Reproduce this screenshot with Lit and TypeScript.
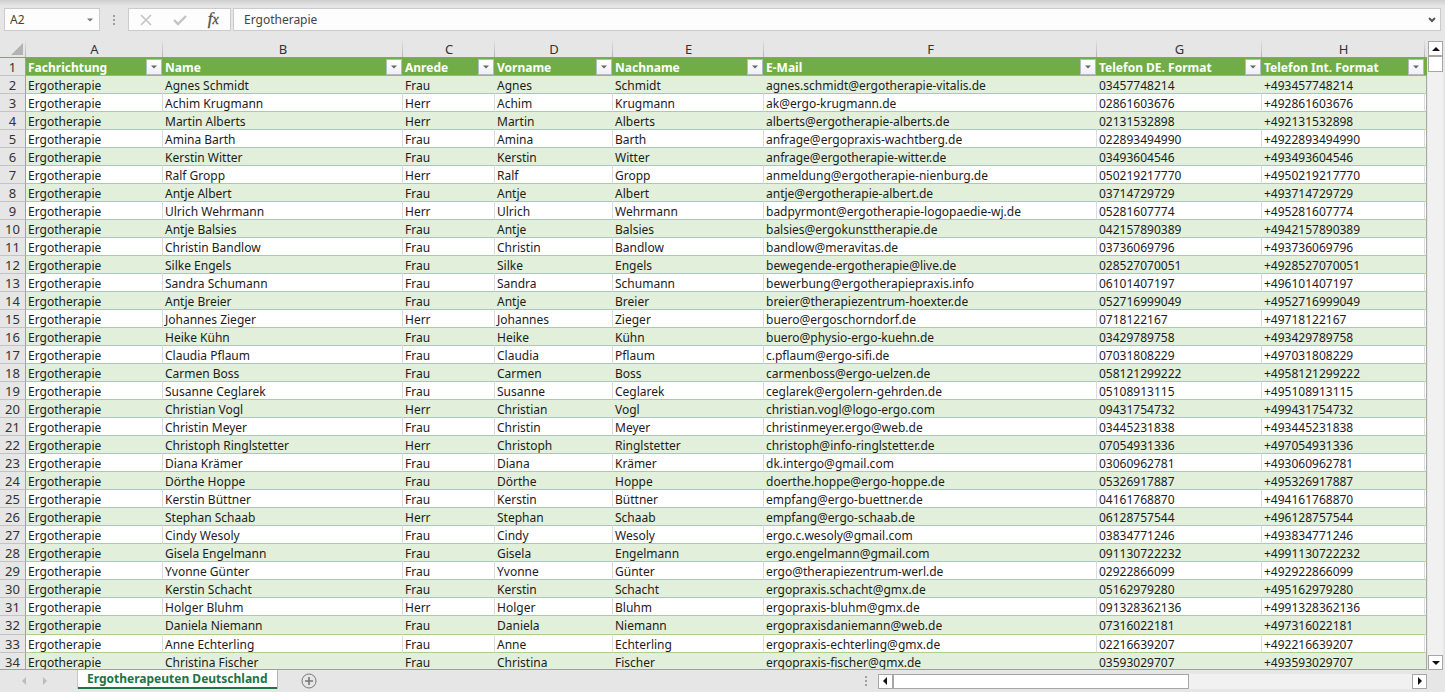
import { LitElement, html, css, svg } from "lit";
import { customElement, state } from "lit/decorators.js";

const COLUMNS = [
  { letter: "A", title: "Fachrichtung", cls: "w-a" },
  { letter: "B", title: "Name", cls: "w-b" },
  { letter: "C", title: "Anrede", cls: "w-c" },
  { letter: "D", title: "Vorname", cls: "w-d" },
  { letter: "E", title: "Nachname", cls: "w-e" },
  { letter: "F", title: "E-Mail", cls: "w-f" },
  { letter: "G", title: "Telefon DE. Format", cls: "w-g" },
  { letter: "H", title: "Telefon Int. Format", cls: "w-h" },
];

// Salutation, first name, last name, e-mail, national number
const CONTACTS: string[][] = [
  ["Frau", "Agnes", "Schmidt", "agnes.schmidt@ergotherapie-vitalis.de", "03457748214"],
  ["Herr", "Achim", "Krugmann", "ak@ergo-krugmann.de", "02861603676"],
  ["Herr", "Martin", "Alberts", "alberts@ergotherapie-alberts.de", "02131532898"],
  ["Frau", "Amina", "Barth", "anfrage@ergopraxis-wachtberg.de", "022893494990"],
  ["Frau", "Kerstin", "Witter", "anfrage@ergotherapie-witter.de", "03493604546"],
  ["Herr", "Ralf", "Gropp", "anmeldung@ergotherapie-nienburg.de", "050219217770"],
  ["Frau", "Antje", "Albert", "antje@ergotherapie-albert.de", "03714729729"],
  ["Herr", "Ulrich", "Wehrmann", "badpyrmont@ergotherapie-logopaedie-wj.de", "05281607774"],
  ["Frau", "Antje", "Balsies", "balsies@ergokunsttherapie.de", "042157890389"],
  ["Frau", "Christin", "Bandlow", "bandlow@meravitas.de", "03736069796"],
  ["Frau", "Silke", "Engels", "bewegende-ergotherapie@live.de", "028527070051"],
  ["Frau", "Sandra", "Schumann", "bewerbung@ergotherapiepraxis.info", "06101407197"],
  ["Frau", "Antje", "Breier", "breier@therapiezentrum-hoexter.de", "052716999049"],
  ["Herr", "Johannes", "Zieger", "buero@ergoschorndorf.de", "0718122167"],
  ["Frau", "Heike", "Kühn", "buero@physio-ergo-kuehn.de", "03429789758"],
  ["Frau", "Claudia", "Pflaum", "c.pflaum@ergo-sifi.de", "07031808229"],
  ["Frau", "Carmen", "Boss", "carmenboss@ergo-uelzen.de", "058121299222"],
  ["Frau", "Susanne", "Ceglarek", "ceglarek@ergolern-gehrden.de", "05108913115"],
  ["Herr", "Christian", "Vogl", "christian.vogl@logo-ergo.com", "09431754732"],
  ["Frau", "Christin", "Meyer", "christinmeyer.ergo@web.de", "03445231838"],
  ["Herr", "Christoph", "Ringlstetter", "christoph@info-ringlstetter.de", "07054931336"],
  ["Frau", "Diana", "Krämer", "dk.intergo@gmail.com", "03060962781"],
  ["Frau", "Dörthe", "Hoppe", "doerthe.hoppe@ergo-hoppe.de", "05326917887"],
  ["Frau", "Kerstin", "Büttner", "empfang@ergo-buettner.de", "04161768870"],
  ["Herr", "Stephan", "Schaab", "empfang@ergo-schaab.de", "06128757544"],
  ["Frau", "Cindy", "Wesoly", "ergo.c.wesoly@gmail.com", "03834771246"],
  ["Frau", "Gisela", "Engelmann", "ergo.engelmann@gmail.com", "091130722232"],
  ["Frau", "Yvonne", "Günter", "ergo@therapiezentrum-werl.de", "02922866099"],
  ["Frau", "Kerstin", "Schacht", "ergopraxis.schacht@gmx.de", "05162979280"],
  ["Herr", "Holger", "Bluhm", "ergopraxis-bluhm@gmx.de", "091328362136"],
  ["Frau", "Daniela", "Niemann", "ergopraxisdaniemann@web.de", "07316022181"],
  ["Frau", "Anne", "Echterling", "ergopraxis-echterling@gmx.de", "02216639207"],
  ["Frau", "Christina", "Fischer", "ergopraxis-fischer@gmx.de", "03593029707"],
];

const toRow = ([salutation, first, last, mail, phone]: string[]) => [
  "Ergotherapie",
  `${first} ${last}`,
  salutation,
  first,
  last,
  mail,
  phone,
  `+49${phone.slice(1)}`,
];

const arrow = (points: string, size = 8) => html`
  <svg width=${size} height=${size} viewBox="0 0 8 8" aria-hidden="true">
    ${svg`<polygon points=${points} fill="currentColor"></polygon>`}
  </svg>
`;
const DOWN = "0,2 8,2 4,6";
const UP = "0,6 8,6 4,2";
const LEFT = "6,0 6,8 2,4";
const RIGHT = "2,0 2,8 6,4";

@customElement("formula-bar")
export class FormulaBar extends LitElement {
  static styles = css`
    :host {
      display: block;
      background: linear-gradient(#cfcfcf, #e6e6e6 6px);
    }
    .bar {
      display: flex;
      align-items: stretch;
      height: 23px;
      padding: 8px 4px 8px 4px;
    }
    .box {
      display: flex;
      align-items: center;
      box-sizing: border-box;
      border: 1px solid #cbcbcb;
      background: #fdfdfd;
    }
    .name {
      width: 96px;
    }
    .formula {
      flex: 1;
      min-width: 0;
      margin-left: 2px;
    }
    input {
      flex: 1;
      min-width: 0;
      border: 0;
      outline: 0;
      background: none;
      font: 12px/18px "Noto Sans", sans-serif;
      color: #444;
      padding: 0 0 0 5px;
    }
    .formula input {
      padding-left: 10px;
    }
    button {
      display: flex;
      align-items: center;
      justify-content: center;
      border: 0;
      background: none;
      padding: 0;
      width: 18px;
      height: 20px;
      color: #777;
    }
    .formula button {
      width: 16px;
      color: #555;
    }
    .grip {
      width: 28px;
      display: flex;
      align-items: center;
      justify-content: center;
      color: #a0a0a0;
    }
    .tools {
      width: 103px;
    }
    .tools button {
      flex: 1;
      color: #c4c4c4;
    }
    .tools .fx {
      font: italic 17px/20px "Liberation Serif", serif;
      color: #4f4f4f;
      -webkit-text-stroke: 0.3px #4f4f4f;
    }
    .fx small {
      font-size: 14px;
    }
  `;

  render() {
    return html`
      <div class="bar">
        <div class="box name">
          <input aria-label="Namenfeld" value="A2" />
          <button aria-label="Namen anzeigen">${arrow(DOWN, 6)}</button>
        </div>
        <div class="grip">
          <svg width="2" height="10" viewBox="0 0 2 10" fill="currentColor" aria-hidden="true">
            <rect width="2" height="2" /><rect y="4" width="2" height="2" /><rect y="8" width="2" height="2" />
          </svg>
        </div>
        <div class="box tools">
          <button aria-label="Abbrechen">
            <svg width="12" height="12" viewBox="0 0 12 12" fill="none" stroke="currentColor" stroke-width="1.6">
              <path d="M1 1L11 11M11 1L1 11" />
            </svg>
          </button>
          <button aria-label="Eingeben">
            <svg width="14" height="12" viewBox="0 0 14 12" fill="none" stroke="currentColor" stroke-width="2.4">
              <path d="M1 6L5 10L13 2" />
            </svg>
          </button>
          <button class="fx" aria-label="Funktion einfügen"><span>f<small>x</small></span></button>
        </div>
        <div class="box formula">
          <input aria-label="Bearbeitungsleiste" value="Ergotherapie" />
          <button aria-label="Bearbeitungsleiste erweitern">
            <svg width="8" height="6" viewBox="0 0 8 6" fill="none" stroke="currentColor" stroke-width="2">
              <path d="M1 1L4 4L7 1" />
            </svg>
          </button>
        </div>
      </div>
    `;
  }
}

@customElement("sheet-grid")
export class SheetGrid extends LitElement {
  static styles = css`
    :host {
      display: block;
      overflow: hidden;
      box-sizing: border-box;
      border-bottom: 1px solid #9f9f9f;
    }
    table {
      table-layout: fixed;
      border-collapse: separate;
      border-spacing: 0;
      width: 100%;
      height: calc(100% + 2px);
      font: 12px/15px "Noto Sans", sans-serif;
      color: #1c1c1c;
    }
    th,
    td {
      box-sizing: border-box;
      padding: 2px 0 0 2px;
      white-space: nowrap;
      overflow: hidden;
      text-align: left;
      height: 18px;
    }
    .w-num { width: 26px; }
    .w-a { width: 137px; }
    .w-b { width: 240px; }
    .w-c { width: 92px; }
    .w-d { width: 118px; }
    .w-e { width: 151px; }
    .w-g { width: 165px; }
    .w-h { width: 163px; }
    .w-edge { width: 2px; }
    .letters th {
      height: 19px;
      padding: 2px 0 0;
      font-size: 13px;
      line-height: 16px;
      font-weight: 400;
      text-align: center;
      color: #333;
      background: linear-gradient(#e6e6e6, #b4b4b4) right / 1px 100% no-repeat #e6e6e6;
      border-bottom: 1px solid #8d9c83;
    }
    .letters .edge {
      background: #e6e6e6;
    }
    .letters .corner {
      text-align: right;
      padding: 2px 3px 0 0;
      line-height: 0;
    }
    .num {
      padding: 2px 0 0;
      text-align: center;
      font-size: 13px;
      font-weight: 400;
      color: #333;
      background: #e6e6e6;
      border-right: 1px solid #a0a0a0;
      border-bottom: 1px solid #c3c3c3;
    }
    .titles .title {
      padding-top: 0;
      background: #70ad47;
      color: #fff;
      font-weight: 700;
      border-bottom: 1px solid #8fc06d;
    }
    .title div {
      display: flex;
      align-items: center;
      justify-content: space-between;
    }
    .title span {
      padding-top: 2px;
    }
    .filter {
      display: flex;
      align-items: center;
      justify-content: center;
      box-sizing: border-box;
      width: 16px;
      height: 16px;
      padding: 0;
      margin-right: 1px;
      border: 1px solid #b5b9c4;
      background: linear-gradient(#fff, #eef0f5);
      color: #666;
    }
    .cell {
      background: #fff;
      border-bottom: 1px solid #a9d08e;
      border-right: 1px solid #dcdcdc;
    }
    .band .cell {
      background: #e2efda;
      border-right-color: #e2efda;
    }
    .cell.edge,
    .band .cell.edge {
      border-right: 1px solid #a9a9a9;
      padding: 0;
    }
  `;

  render() {
    return html`
      <table>
        <colgroup>
          <col class="w-num" />
          ${COLUMNS.map((c) => html`<col class=${c.cls} />`)}
          <col class="w-edge" />
        </colgroup>
        <thead>
          <tr class="letters">
            <th class="corner" aria-label="Alles auswählen">
              <svg width="12" height="12" viewBox="0 0 12 12"><polygon points="12,0 12,12 0,12" fill="#b3b3b3" /></svg>
            </th>
            ${COLUMNS.map((c) => html`<th scope="col">${c.letter}</th>`)}
            <th class="edge"></th>
          </tr>
        </thead>
        <tbody>
          <tr class="titles">
            <th class="num" scope="row">1</th>
            ${COLUMNS.map(
              (c) => html`
                <th class="title">
                  <div>
                    <span>${c.title}</span>
                    <button class="filter" aria-label="${c.title} filtern">${arrow(DOWN, 6)}</button>
                  </div>
                </th>
              `,
            )}
            <th class="title"></th>
          </tr>
          ${CONTACTS.map(
            (contact, i) => html`
              <tr class=${i % 2 === 0 ? "band" : ""}>
                <th class="num" scope="row">${i + 2}</th>
                ${toRow(contact).map((value) => html`<td class="cell">${value}</td>`)}
                <td class="cell edge"></td>
              </tr>
            `,
          )}
        </tbody>
      </table>
    `;
  }
}

@customElement("scroll-track")
export class ScrollTrack extends LitElement {
  static properties = { vertical: { type: Boolean, reflect: true } };
  declare vertical: boolean;

  static styles = css`
    :host {
      display: flex;
      background: #f1f1f1;
      color: #111;
    }
    :host([vertical]) {
      flex-direction: column;
    }
    button,
    .thumb {
      box-sizing: border-box;
      border: 1px solid #a6a6a6;
      background: #fff;
      padding: 0;
    }
    button {
      display: flex;
      align-items: center;
      justify-content: center;
      width: 15px;
      height: 15px;
      color: inherit;
    }
    .track {
      flex: 1;
    }
    .thumb {
      width: 57%;
      height: 15px;
    }
    :host([vertical]) .thumb {
      width: 15px;
      height: 16px;
    }
  `;

  render() {
    return html`
      <button aria-label=${this.vertical ? "Nach oben" : "Nach links"}>${arrow(this.vertical ? UP : LEFT)}</button>
      <div class="track"><div class="thumb"></div></div>
      <button aria-label=${this.vertical ? "Nach unten" : "Nach rechts"}>${arrow(this.vertical ? DOWN : RIGHT)}</button>
    `;
  }
}

@customElement("sheet-tabs")
export class SheetTabs extends LitElement {
  @state() private active = "Ergotherapeuten Deutschland";

  static styles = css`
    :host {
      display: flex;
      height: 22px;
      background: #e6e6e6;
    }
    button {
      border: 0;
      background: none;
      padding: 0;
      display: flex;
      align-items: center;
      justify-content: center;
      color: inherit;
    }
    .nav {
      display: flex;
      justify-content: center;
      gap: 13px;
      box-sizing: border-box;
      width: 78px;
      padding-right: 10px;
      color: #bcbcbc;
    }
    .tab {
      box-sizing: border-box;
      height: 19px;
      padding: 0 9px;
      background: #fff;
      border-bottom: 2px solid #217346;
      box-shadow: 1px 0 #b5b5b5, -1px 0 #c8c8c8;
      color: #217346;
      font: 700 12px/17px "Noto Sans", sans-serif;
      white-space: nowrap;
    }
    .add {
      width: 16px;
      height: 22px;
      margin-left: 24px;
      color: #777;
    }
    .grip {
      display: flex;
      align-items: center;
      margin-left: auto;
      color: #a0a0a0;
    }
    scroll-track {
      width: 38%;
      height: 15px;
      align-self: center;
      margin: 0 18px 0 11px;
    }
  `;

  render() {
    return html`
      <div class="nav">
        <button aria-label="Vorheriges Blatt">${arrow(LEFT)}</button>
        <button aria-label="Nächstes Blatt">${arrow(RIGHT)}</button>
      </div>
      <button class="tab">${this.active}</button>
      <button class="add" aria-label="Neues Blatt">
        <svg width="16" height="16" viewBox="0 0 16 16" fill="none" stroke="currentColor">
          <circle cx="8" cy="8" r="7" />
          <path d="M8 4V12M4 8H12" stroke-width="1.6" />
        </svg>
      </button>
      <div class="grip">
        <svg width="2" height="10" viewBox="0 0 2 10" fill="currentColor" aria-hidden="true">
          <rect width="2" height="2" /><rect y="4" width="2" height="2" /><rect y="8" width="2" height="2" />
        </svg>
      </div>
      <scroll-track></scroll-track>
    `;
  }
}

@customElement("app-root")
export class AppRoot extends LitElement {
  static styles = css`
    :host {
      display: flex;
      flex-direction: column;
      height: 100vh;
      background: #e6e6e6;
      overflow: hidden;
    }
    .main {
      flex: 1;
      min-height: 0;
      display: flex;
    }
    sheet-grid {
      flex: 1;
      min-width: 0;
    }
    .side {
      display: flex;
      padding: 2px 2px 0 1px;
    }
  `;

  render() {
    return html`
      <formula-bar></formula-bar>
      <div class="main">
        <sheet-grid></sheet-grid>
        <div class="side"><scroll-track vertical></scroll-track></div>
      </div>
      <sheet-tabs></sheet-tabs>
    `;
  }
}
